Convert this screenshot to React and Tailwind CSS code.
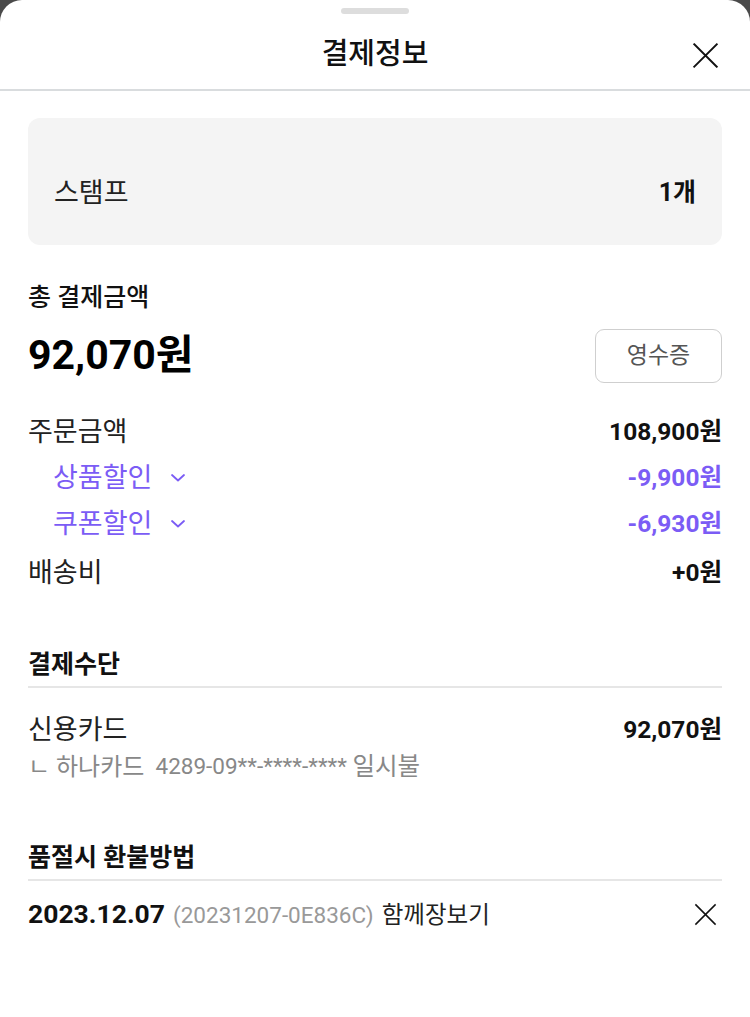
import React from "react";

const font = { fontFamily: 'Roboto, "Noto Sans CJK KR", sans-serif' };

function XIcon({ size = 28, stroke = 2 }) {
  return (
    <svg width={size} height={size} viewBox="0 0 24 24" fill="none" stroke="#111" strokeWidth={stroke} strokeLinecap="square">
      <path d="M2 2 L22 22 M22 2 L2 22" />
    </svg>
  );
}

function Chevron() {
  return (
    <svg width="16" height="10" viewBox="0 0 16 10" fill="none" stroke="#7b5cf5" strokeWidth="1.8" strokeLinecap="round" strokeLinejoin="round">
      <path d="M2 2 L8 7.5 L14 2" />
    </svg>
  );
}

export default function App() {
  return (
    <div className="w-[750px] h-[1017px] bg-[#4a4a4a] overflow-hidden" style={font}>
      <div className="bg-white h-full rounded-t-[22px] flex flex-col">
        <div className="flex justify-center pt-[8px]">
          <div className="w-[68px] h-[6px] rounded-full bg-[#dddddd]" />
        </div>
        <div className="relative h-[77px] flex items-center justify-center border-b-2 border-[#d9dcde] pt-[6px]">
          <span className="text-[29px] font-medium text-[#111]">결제정보</span>
          <div className="absolute right-[31px] top-[28px]">
            <XIcon size={27} stroke={1.7} />
          </div>
        </div>

        <div className="px-[28px]">
          <div className="mt-[27px] h-[127px] rounded-[12px] bg-[#f4f4f4] flex items-center justify-between px-[26px] pt-[23px]">
            <span className="text-[27px] text-[#222]">스탬프</span>
            <span className="text-[25px] font-bold text-[#111]">1개</span>
          </div>

          <div className="mt-[38px] h-[30px] flex items-center text-[25px] font-medium text-[#111]">총 결제금액</div>
          <div className="mt-[16px] h-[54px] flex items-center justify-between">
            <span className="text-[41px] font-bold text-[#000]">92,070원</span>
            <button className="w-[127px] h-[54px] border border-[#cfcfcf] rounded-[9px] text-[23px] text-[#555] bg-white">영수증</button>
          </div>

          <div className="mt-[26px] flex flex-col">
            <div className="flex justify-between items-center h-[46px]">
              <span className="text-[27px] text-[#222]">주문금액</span>
              <span className="text-[24.5px] font-bold text-[#111]">108,900원</span>
            </div>
            <div className="flex justify-between items-center h-[46px]">
              <span className="pl-[25px] text-[27px] text-[#7b5cf5] flex items-center gap-[18px]">상품할인<Chevron /></span>
              <span className="text-[24.5px] font-bold text-[#7b5cf5]">-9,900원</span>
            </div>
            <div className="flex justify-between items-center h-[46px]">
              <span className="pl-[25px] text-[27px] text-[#7b5cf5] flex items-center gap-[18px]">쿠폰할인<Chevron /></span>
              <span className="text-[24.5px] font-bold text-[#7b5cf5]">-6,930원</span>
            </div>
            <div className="mt-[3px] flex justify-between items-center h-[46px]">
              <span className="text-[27px] text-[#222]">배송비</span>
              <span className="text-[24.5px] font-bold text-[#111]">+0원</span>
            </div>
          </div>

          <div className="mt-[54px] pb-[6px] border-b-2 border-[#e6e6e6]">
            <div className="h-[30px] flex items-center text-[25px] font-bold text-[#111]">결제수단</div>
          </div>
          <div className="mt-[25px] h-[34px] flex justify-between items-center">
            <span className="text-[27px] text-[#222]">신용카드</span>
            <span className="text-[24.5px] font-bold text-[#111]">92,070원</span>
          </div>
          <div className="mt-[5px] h-[30px] flex items-center text-[22.5px] text-[#888] whitespace-pre">
            <span className="text-[24px]">ㄴ 하나카드</span>
            <span>{"  4289-09**-****-**** "}</span>
            <span className="text-[24.5px]">일시불</span>
          </div>

          <div className="mt-[61px] pb-[6px] border-b-2 border-[#e6e6e6]">
            <div className="h-[30px] flex items-center text-[25px] font-bold text-[#111]">품절시 환불방법</div>
          </div>
          <div className="mt-[16px] h-[34px] flex justify-between items-center">
            <div className="flex items-baseline gap-[8px]">
              <span className="text-[26.5px] font-bold text-[#111]">2023.12.07</span>
              <span className="text-[22.5px] text-[#999]">(20231207-0E836C)</span>
              <span className="text-[23.5px] text-[#222]">함께장보기</span>
            </div>
            <div className="mr-[5px]">
              <XIcon size={23} stroke={1.6} />
            </div>
          </div>
        </div>
      </div>
    </div>
  );
}
